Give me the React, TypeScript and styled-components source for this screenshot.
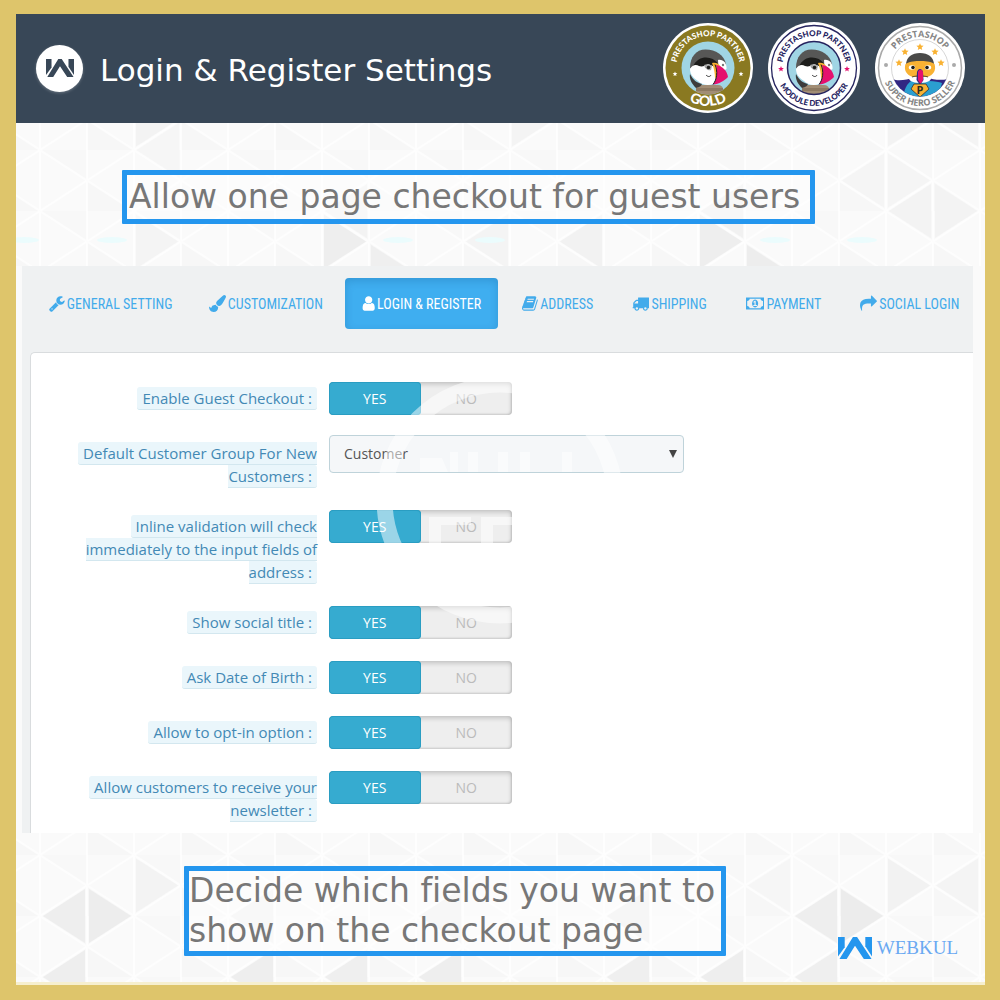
import React, { useState } from "react";
import styled, { createGlobalStyle, css } from "styled-components";

const GlobalStyle = createGlobalStyle`
  *, *::before, *::after { box-sizing: border-box; }
  body { margin: 0; }
  button, select, input { font: inherit; }
`;

const uiFont = '"Open Sans", "Noto Sans", sans-serif';
const titleFont = '"DejaVu Sans", Verdana, sans-serif';
const narrowFont = '"Ubuntu Condensed", "Roboto Condensed", "Liberation Sans Narrow", sans-serif';

/* ---------- page frame ---------- */

const Frame = styled.div`
  min-height: 100vh;
  padding: 14px 15px 15px 16px;
  background: #dec56b;
  display: flex;
`;

const Board = styled.div`
  flex: 1;
  min-width: 0;
  display: flex;
  flex-direction: column;
  background: #fafafa;
`;

const Header = styled.header`
  display: flex;
  align-items: center;
  gap: 17px;
  padding: 8px 19px 9px 20px;
  background: #384757;
`;

const RoundMark = styled.span`
  flex: none;
  display: grid;
  place-items: center;
  width: 47px;
  height: 47px;
  border-radius: 50%;
  background: #fff;
  box-shadow: 0 1px 3px rgba(255, 255, 255, 0.25);
`;

const Title = styled.h1`
  flex: 1;
  margin: 0;
  padding-top: 4px;
  font: 400 31px/44px ${titleFont};
  color: #fff;
  white-space: nowrap;
`;

const Badges = styled.div`
  display: flex;
  gap: 14px;
`;

/* ---------- patterned bands ---------- */

const Band = styled.section`
  position: relative;
  display: flex;
  align-items: flex-start;
  overflow: hidden;
`;

const TopBand = styled(Band)`
  padding: 47px 106px 42px;
`;

const BottomBand = styled(Band)`
  flex: 1;
  justify-content: space-between;
  padding: 33px 27px 22px 168px;
  border-bottom: 3px solid #f6efcf;
`;

const Backdrop = styled.svg`
  position: absolute;
  inset: 0;
  width: 100%;
  height: 100%;
`;

const Note = styled.p`
  position: relative;
  margin: 0;
  padding: 0 6px 0 0;
  border: 5px solid #2496ee;
  border-radius: 1px;
  background: rgba(255, 255, 255, 0.45);
  font: 400 33px/40px ${titleFont};
  font-variant-ligatures: none;
  color: #777;
`;

const TopNote = styled(Note)`
  padding: 0 10px 0 2px;
  line-height: 44px;
`;

const Brand = styled.div`
  position: relative;
  align-self: flex-end;
  display: flex;
  align-items: center;
  gap: 5px;
  font: 400 19px/24px "Liberation Serif", serif;
  color: #6aa9f2;
`;

/* ---------- settings panel ---------- */

const Panel = styled.main`
  position: relative;
  margin: 0 12px 0 6px;
  padding: 12px 0 0 8px;
  background: #eff1f2;
  overflow: hidden;
`;

const Tabs = styled.nav`
  display: grid;
  grid-template-columns:
    minmax(0, 153fr) minmax(0, 146fr) minmax(0, 154fr) minmax(0, 103fr)
    minmax(0, 107fr) minmax(0, 107fr) minmax(0, 130fr);
  column-gap: 7px;
  padding-left: 2px;
`;

const Tab = styled.button<{ $active: boolean }>`
  display: flex;
  align-items: center;
  justify-content: flex-start;
  gap: 2px;
  height: 51px;
  padding: 0 0 0 17px;
  border: 0;
  border-radius: 4px;
  background: none;
  font: 400 14px/20px ${narrowFont};
  color: #42abeb;
  white-space: nowrap;
  cursor: pointer;
  ${(p) =>
    p.$active &&
    css`
      background: #3faef0;
      box-shadow: inset 0 3px 8px rgba(0, 60, 110, 0.2);
      color: #fff;
    `}

  svg { flex: none; }
`;

const Card = styled.form`
  margin-top: 23px;
  padding: 29px 20px 11px 47px;
  border: 1px solid #d9dcde;
  border-width: 1px 0 0 1px;
  border-top-left-radius: 5px;
  background: #fff;
  display: flex;
  flex-direction: column;
  gap: 22px;
`;

const Row = styled.div`
  display: grid;
  grid-template-columns: 239px minmax(0, 355px);
  column-gap: 12px;
  align-items: start;
`;

const LabelCell = styled.div`
  padding-top: 5px;
  text-align: right;
  font: 400 15px/23px ${uiFont};
  color: #4389b5;
`;

const LabelText = styled.label`
  padding: 1px 5px;
  border-bottom: 1px solid #d3e7ef;
  border-radius: 3px;
  background: #eaf6fb;
`;

const ControlCell = styled.div`
  display: flex;
  align-items: center;
  height: 33px;
`;

const Switch = styled.div`
  display: flex;
  width: 183px;
  height: 33px;
  border-radius: 4px;
  background: #eee;
  box-shadow: inset 0 2px 5px rgba(0, 0, 0, 0.2), inset -1px -1px 2px rgba(0, 0, 0, 0.12);
  font: 400 14px/34px ${uiFont};
  overflow: hidden;
`;

const Option = styled.label<{ $on: boolean }>`
  position: relative;
  flex: 1;
  text-align: center;
  color: ${(p) => (p.$on ? "#fff" : "#bbb")};
  background: ${(p) => (p.$on ? "#36abd0" : "transparent")};
  border-radius: 4px;
  box-shadow: ${(p) => (p.$on ? "inset 0 0 0 1px #2a9dc2" : "none")};
  cursor: pointer;

  input {
    position: absolute;
    inset: 0;
    margin: 0;
    opacity: 0;
  }
`;

const SelectBox = styled.span`
  position: relative;
  flex: 1;
  display: flex;

  &::after {
    content: "";
    position: absolute;
    right: 7px;
    top: 15px;
    border: 4px solid transparent;
    border-width: 8px 4px 0;
    border-top-color: #444;
    pointer-events: none;
  }
`;

const Select = styled.select`
  appearance: none;
  flex: 1;
  height: 38px;
  padding: 0 24px 0 14px;
  border: 1px solid #bfd3da;
  border-radius: 4px;
  background: #f5f7f9;
  font: 400 14px/20px ${uiFont};
  color: #555;
`;

const Watermark = styled.svg`
  position: absolute;
  left: 354px;
  top: 110px;
  pointer-events: none;
`;

/* ---------- drawings ---------- */

const WMark = ({ width, color }: { width: number; color: string }) => (
  <svg width={width} height={(width * 22) / 33} viewBox="0 0 33 22" fill={color} aria-hidden="true">
    <path d="M0 0h6.500v10L0 19z" />
    <path d="M26.500 0H33v19L26.500 9z" />
    <path d="M1 22 14.500 0h4L33 22h-7.500L16.500 8.500 8 22z" />
  </svg>
);

type Tile = [col: number, row: number, dir: 1 | -1, fill: string];

/** Triangle lattice whose first full vertex sits at (24, originY). */
const Lattice = ({ id, originY, tiles, glints = [] }: {
  id: string; originY: number; tiles: Tile[]; glints?: number[];
}) => (
  <Backdrop aria-hidden="true">
    <defs>
      <pattern id={id} width="94" height="61" x="24" y={originY} patternUnits="userSpaceOnUse">
        <rect width="94" height="61" fill="#fafafa" />
        <path d="M0 0 47 30.500V-30.500z" fill="#f8f8f8" />
        <path d="M94 61 47 30.500V91.500z" fill="#f7f7f7" />
        <path d="M0 0v61M47 0v61M94 0v61M0 0l94 61M0 61 94 0" stroke="#fff" strokeOpacity="0.7" strokeWidth="2" />
      </pattern>
    </defs>
    <rect width="100%" height="100%" fill={`url(#${id})`} />
    {tiles.map(([col, row, dir, fill]) => {
      const x = 24 + col * 47;
      const y = originY + row * 30.5;
      return <path key={`${col}:${row}:${dir}`} d={`M${x + 3 * dir} ${y}l${42 * dir} -27v54z`} fill={fill} />;
    })}
    {glints.map((x) => <ellipse key={x} cx={x} cy="117" rx="15" ry="3" fill="#ebfcfd" />)}
  </Backdrop>
);

const TOP_TILES: Tile[] = [
  [3, -1, -1, "#f3f3f3"], [2, 0, 1, "#f6f6f6"], [7, 3, -1, "#eeeeee"], [8, 4, -1, "#efefef"],
  [6, 2, 1, "#f3f3f3"], [3, 3, -1, "#f4f4f4"], [9, 3, 1, "#f4f4f4"], [11, -1, -1, "#f4f4f4"],
  [15, 3, -1, "#eeeeee"], [16, 4, -1, "#ededed"], [14, 2, 1, "#f1f1f1"], [11, 3, 1, "#f2f2f2"],
  [17, 1, 1, "#f5f5f5"], [18, 2, 1, "#f3f3f3"], [20, 2, -1, "#f3f3f3"], [19, 1, -1, "#f5f5f5"],
  [19, -1, -1, "#f3f3f3"], [19, -1, 1, "#f4f4f4"],
];

const BOTTOM_TILES: Tile[] = [
  [0, 2, 1, "#eeeeee"], [2, 2, -1, "#ededed"], [3, 1, -1, "#f3f3f3"], [0, 4, 1, "#eeeeee"],
  [4, 2, 1, "#f2f2f2"], [4, 4, 1, "#eeeeee"], [6, 4, 1, "#efefef"], [8, 4, 1, "#eeeeee"],
  [8, 2, 1, "#f0f0f0"], [12, 2, 1, "#eeeeee"], [12, 4, 1, "#efefef"], [14, 4, 1, "#eeeeee"],
  [16, 4, 1, "#efefef"], [16, 2, 1, "#eeeeee"], [18, 2, -1, "#ececec"], [19, 1, -1, "#f2f2f2"],
  [19, 1, 1, "#f4f4f4"], [15, 1, 1, "#f6f6f6"],
];

const TOP_GLINTS = [8, 96, 382, 474, 759, 846];

const Arcs = ({ id, top, bottom }: { id: string; top: number; bottom: number }) => (
  <defs>
    <path id={`${id}-top`} d={`M${46 - top} 46a${top} ${top} 0 0 1 ${2 * top} 0`} />
    <path id={`${id}-bottom`} d={`M${46 - bottom} 46a${bottom} ${bottom} 0 0 0 ${2 * bottom} 0`} />
  </defs>
);

const badgeFont = 'Lato, "Open Sans", sans-serif';

const ArcText = ({ path, size, fill, weight = 700, family = badgeFont, children }: {
  path: string; size: number; fill: string; weight?: number; family?: string; children: string;
}) => (
  <text fontFamily={family} fontWeight={weight} fontSize={size} fill={fill} textAnchor="middle">
    <textPath href={`#${path}`} startOffset="50%">{children}</textPath>
  </text>
);

const Star = ({ x, y, r, fill }: { x: number; y: number; r: number; fill: string }) => {
  const points = Array.from({ length: 10 }, (_, i) => {
    const radius = i % 2 ? r * 0.45 : r;
    const angle = (Math.PI / 5) * i - Math.PI / 2;
    return `${(x + radius * Math.cos(angle)).toFixed(2)},${(y + radius * Math.sin(angle)).toFixed(2)}`;
  }).join(" ");
  return <polygon points={points} fill={fill} />;
};

const Puffin = ({ clip }: { clip: string }) => (
  <g>
    <clipPath id={clip}><circle cx="46" cy="46" r="26.500" /></clipPath>
    <circle cx="46" cy="46" r="26.500" fill="#a0d5e4" />
    <g clipPath={`url(#${clip})`}>
      <path d="M34 76V67c0-3 1-4 4-4h18c3 0 5 2 5 4v9z" fill="#a18d75" />
      <path d="M34 66h27v3H34z" fill="#8c7962" />
      <path d="M28 46c0-11 6-18.500 15.500-18.500C54 27.500 62 33 64 42l-7 6H32z" fill="#575756" />
      <path d="M31 44c3-6 8-8.500 13-8.500 5 0 9 2 12 6l-3 8H35z" fill="#1d1d1b" />
      <path d="M28 47c2-4 6-5 9-3 3 1 6 0 9-2l7 3 1 12-3 5c-5 2-11 1-15-3-5-3-8-7-8-12z" fill="#fff" />
      <path d="M28 52c3 6 7 9 12 10-1 2-2 3-6 4-4-4-7-9-6-14z" fill="#3c3c3b" />
      <path d="M56 38c5-1 9 3 8.500 9-2 2-6 1-8-2z" fill="#fff" />
      <path d="M42 43c3-1 6-1 8 1l-1 4c-3 1-6-1-7-5z" fill="#a7a7a7" />
      <circle cx="46.500" cy="45.500" r="1.800" fill="#1d1d1b" />
      <circle cx="61" cy="43" r="1.200" fill="#777" />
      <path d="M50 41c3-1 7 0 9 4l-6 12c0-6-1-11-3-16z" fill="#f9b233" />
      <path d="M54 43c7 1 11 6 12 12-4 4-9 7-15 7.500 4-5 5-13 3-19.500z" fill="#e5106e" />
      <path d="M53 42.500c3 7 2 15-2 20" stroke="#1d1d1b" strokeWidth="1" fill="none" />
      <path d="M44 53c2 2 4 2 5 0" stroke="#333" strokeWidth="1" fill="none" />
    </g>
  </g>
);

const GoldBadge = () => (
  <svg width="92" height="92" viewBox="0 0 92 92" role="img" aria-label="PrestaShop Partner Gold">
    <Arcs id="gold" top={32} bottom={38} />
    <circle cx="46" cy="46" r="45" fill="#fff" />
    <circle cx="46" cy="46" r="42.500" fill="#8a7921" />
    <Puffin clip="gold-clip" />
    <ArcText path="gold-top" size={8} fill="#fff" weight={900}>PRESTASHOP PARTNER</ArcText>
    <ArcText path="gold-bottom" size={14} fill="#fff" weight={900}>GOLD</ArcText>
    <Star x={13} y={52} r={2.5} fill="#fff" />
    <Star x={79} y={52} r={2.5} fill="#fff" />
  </svg>
);

const ModuleBadge = () => (
  <svg width="92" height="92" viewBox="0 0 92 92" role="img" aria-label="PrestaShop Partner Module Developer">
    <Arcs id="module" top={32} bottom={38} />
    <circle cx="46" cy="46" r="46" fill="#fff" />
    <circle cx="46" cy="46" r="42.500" fill="#fff" stroke="#26245f" strokeWidth="1.300" />
    <Puffin clip="module-clip" />
    <circle cx="46" cy="46" r="26.500" fill="none" stroke="#26245f" strokeWidth="1.500" />
    <ArcText path="module-top" size={8} fill="#26245f" weight={900}>PRESTASHOP PARTNER</ArcText>
    <ArcText path="module-bottom" size={8} fill="#26245f" weight={900}>MODULE DEVELOPER</ArcText>
    <Star x={13} y={47} r={3} fill="#e5106e" />
    <Star x={79} y={47} r={3} fill="#e5106e" />
  </svg>
);

const HERO_STARS = [[25, 41], [31, 30], [46, 25], [61, 30], [67, 41]];

const HeroBadge = () => (
  <svg width="92" height="92" viewBox="0 0 92 92" role="img" aria-label="PrestaShop Super Hero Seller">
    <Arcs id="hero" top={31} bottom={38} />
    <clipPath id="hero-clip"><circle cx="46" cy="46" r="28.500" /></clipPath>
    <circle cx="46" cy="46" r="45" fill="#fff" />
    <circle cx="46" cy="46" r="41.500" fill="none" stroke="#aaa" strokeWidth="1.500" />
    <circle cx="46" cy="46" r="28.500" fill="#fff" stroke="#bbb" strokeWidth="0.600" />
    <g clipPath="url(#hero-clip)">
      <path d="M18 57c8 3 15 0 21-1h14c6 1 12 3 21 1l-6 20H26z" fill="#312783" />
      <path d="M29 76c1-8 3-13 8-17h18c6 0 10 1 13 2l-4 15z" fill="#2b9fd0" />
      <path d="M35 53h22c2 5-3 8-11 8s-13-3-11-8z" fill="#fff" />
      <path d="M32 43c0-8 6-12 14-12s14 4 14 12z" fill="#4a4a49" />
      <path d="M31.500 42c5-3 10-3 14.500-3s10 0 14.500 3c2 6-1 11-7 13H38.500c-6-2-9-7-7-13z" fill="#f9b233" />
      <ellipse cx="38" cy="45.500" rx="3.200" ry="2.200" fill="#fff" />
      <ellipse cx="54" cy="45.500" rx="3.200" ry="2.200" fill="#fff" />
      <circle cx="39" cy="45.500" r="1.800" fill="#1d1d1b" />
      <circle cx="53" cy="45.500" r="1.800" fill="#1d1d1b" />
      <path d="M38 55c3-1 5-1 8-1s5 0 8 1" stroke="#333" strokeWidth="0.800" fill="none" />
      <path d="M43 50c1-4 5-4 6 0l.5 8-3.500 5-3.500-5z" fill="#312783" />
      <path d="M44 50c1-3 4-3 5 0v8l-2.500 4-2.500-4z" fill="#e5106e" />
      <path d="M40 62h12l3 5-9 8-9-8z" fill="#f9b233" stroke="#333" strokeWidth="0.800" />
    </g>
    <text x="46" y="72" fontFamily='"Open Sans", sans-serif' fontWeight="700" fontSize="11" textAnchor="middle" fill="#312c20">P</text>
    <ArcText path="hero-top" size={9} fill="#868686" family='"Open Sans", sans-serif'>PRESTASHOP</ArcText>
    <ArcText path="hero-bottom" size={9} fill="#868686" family='"Open Sans", sans-serif'>SUPER HERO SELLER</ArcText>
    <circle cx="12" cy="43" r="2" fill="#aaa" />
    <circle cx="80" cy="43" r="2" fill="#aaa" />
    {HERO_STARS.map(([x, y]) => <Star key={x} x={x} y={y} r={3.8} fill="#f9b233" />)}
  </svg>
);

const Glyph = ({ d, width = 1792 }: { d: string; width?: number }) => (
  <svg width={(width * 17) / 1792} height="17" viewBox={`0 0 ${width} 1792`} fill="currentColor" aria-hidden="true">
    <path d={d} />
  </svg>
);

const ICONS = {
  wrench: "M384 1472q0-26-19-45t-45-19-45 19-19 45 19 45 45 19 45-19 19-45zm644-420l-682 682q-37 37-90 37-52 0-91-37l-106-108q-38-36-38-90 0-53 38-91l681-681q39 98 114.500 173.500t173.500 114.500zm634-435q0 39-23 106-47 134-164.500 217.500t-258.500 83.500q-185 0-316.500-131.500t-131.500-316.500 131.500-316.500 316.500-131.500q58 0 121.500 16.500t107.500 46.500q16 11 16 28t-16 28l-293 169v224l193 107q5-3 79-48.500t135.500-81 70.500-35.500q15 0 23.500 10t8.500 25z",
  brush: "M1615 0q70 0 122.500 46.500t52.500 116.500q0 63-45 151-332 629-465 752-97 91-218 91-126 0-216.500-92.500t-90.500-219.500q0-128 92-212l638-579q59-54 130-54zm-909 1034q39 76 106.500 130t150.500 76l1 71q4 213-129.500 347t-348.500 134q-123 0-218-46.500t-152.500-127.500-86.500-183-29-220q7 5 41 30t62 44.500 59 36.500 46 17q41 0 55-37 25-66 57.500-112.500t69.500-76 88-47.500 103-25.500 125-10.500z",
  user: "M1344 1399q0 109-62.500 187t-150.500 78h-854q-88 0-150.500-78t-62.500-187q0-85 8.500-160.500t31.500-152 58.500-131 94-89 134.500-34.500q131 128 313 128t313-128q76 0 134.500 34.500t94 89 58.500 131 31.500 152 8.500 160.500zm-256-887q0 159-112.500 271.500t-271.500 112.500-271.500-112.500-112.500-271.500 112.500-271.500 271.500-112.500 271.500 112.500 112.500 271.500z",
  book: "M1639 478q40 57 18 129l-275 906q-19 64-76.500 107.500t-122.500 43.500h-923q-77 0-148.500-53.500t-99.500-131.500q-24-67-2-127 0-4 3-27t4-37q1-8-3-21.500t-3-19.500q2-11 8-21t16.500-23.500 16.500-23.500q23-38 45-91.500t30-91.500q3-10 .5-30t-.5-28q3-11 17-28t17-23q21-36 42-92t25-90q1-9-2.500-32t.5-28q4-13 22-30.500t22-22.500q19-26 42.500-84.500t27.500-96.500q1-8-3-25.500t-2-26.500q2-8 9-18t18-23 17-21q8-12 16.500-30.500t15-35 16-36 19.500-32 26.500-23.500 36-11.500 47.500 5.500l-1 3q38-9 51-9h761q74 0 114 56t18 130l-274 906q-36 119-71.500 153.500t-128.500 34.500h-869q-27 0-38 15-11 16-1 43 24 70 144 70h923q29 0 56-15.500t35-41.500l300-987q7-22 5-57 38 15 59 43zm-1064 2q-4 13 2 22.500t20 9.500h608q13 0 25.500-9.500t16.500-22.500l21-64q4-13-2-22.500t-20-9.500h-608q-13 0-25.500 9.500t-16.500 22.500zm-83 256q-4 13 2 22.500t20 9.500h608q13 0 25.500-9.500t16.500-22.500l21-64q4-13-2-22.500t-20-9.500h-608q-13 0-25.500 9.500t-16.500 22.500z",
  truck: "M640 1408q0-52-38-90t-90-38-90 38-38 90 38 90 90 38 90-38 38-90zm-384-512h384v-256h-158q-13 0-22 9l-195 195q-9 9-9 22v30zm1280 512q0-52-38-90t-90-38-90 38-38 90 38 90 90 38 90-38 38-90zm256-1088v1024q0 15-4 26.500t-13.500 18.500-16.500 11.500-23.500 6-22.500 2-25.500 0-22.500-.5q0 106-75 181t-181 75-181-75-75-181h-384q0 106-75 181t-181 75-181-75-75-181h-64q-3 0-22.500.5t-25.500 0-22.500-2-23.500-6-16.500-11.500-13.500-18.500-4-26.500q0-26 19-45t45-19v-320q0-8-.5-35t0-38 2.500-34.500 6.500-37 14-30.500 22.500-30l198-198q19-19 50.500-32t58.500-13h160v-192q0-26 19-45t45-19h1024q26 0 45 19t19 45z",
  money: "M768 1152h384v-96h-128v-448h-114l-148 137 77 80q42-37 55-57h2v288h-128v96zm512-256q0 70-21 142t-59.500 134-101.500 101-138 39-138-39-101.500-101-59.500-134-21-142 21-142 59.500-134 101.500-101 138-39 138 39 101.500 101 59.500 134 21 142zm512 256v-512q-106 0-181-75t-75-181h-1152q0 106-75 181t-181 75v512q106 0 181 75t75 181h1152q0-106 75-181t181-75zm128-832v1152q0 26-19 45t-45 19h-1792q-26 0-45-19t-19-45v-1152q0-26 19-45t45-19h1792q26 0 45 19t19 45z",
  share: "M1792 640q0 26-19 45l-512 512q-19 19-45 19t-45-19-19-45v-256h-224q-98 0-175.500 6t-154 21.500-133 42.500-105.500 69.500-80 101-48.500 138.500-17.500 181q0 55 5 123 0 6 2.500 23.500t2.500 26.500q0 15-8.500 25t-23.500 10q-16 0-28-17-7-9-13-22t-13.500-30-10.500-24q-127-285-127-451 0-199 53-333 162-403 875-403h224v-256q0-26 19-45t45-19 45 19l512 512q19 19 19 45z",
};

/* ---------- data ---------- */

const TABS = [
  { icon: ICONS.wrench, text: "GENERAL SETTING", width: 1664 },
  { icon: ICONS.brush, text: "CUSTOMIZATION" },
  { icon: ICONS.user, text: "LOGIN & REGISTER", width: 1408 },
  { icon: ICONS.book, text: "ADDRESS", width: 1664 },
  { icon: ICONS.truck, text: "SHIPPING" },
  { icon: ICONS.money, text: "PAYMENT", width: 1920 },
  { icon: ICONS.share, text: "SOCIAL LOGIN" },
];

type Field = { id: string; label: string; options?: string[] };

const FIELDS: Field[] = [
  { id: "guest", label: "Enable Guest Checkout :" },
  { id: "group", label: "Default Customer Group For New Customers :", options: ["Customer", "Guest", "Visitor"] },
  { id: "inline", label: "Inline validation will check immediately to the input fields of address :" },
  { id: "social", label: "Show social title :" },
  { id: "birth", label: "Ask Date of Birth :" },
  { id: "optin", label: "Allow to opt-in option :" },
  { id: "newsletter", label: "Allow customers to receive your newsletter :" },
];

const YesNo = ({ id }: { id: string }) => {
  const [on, setOn] = useState(true);
  return (
    <Switch role="radiogroup" aria-labelledby={`${id}-label`}>
      <Option $on={on}>
        <input type="radio" id={id} name={id} checked={on} onChange={() => setOn(true)} />
        YES
      </Option>
      <Option $on={!on}>
        <input type="radio" name={id} checked={!on} onChange={() => setOn(false)} />
        NO
      </Option>
    </Switch>
  );
};

const FormRow = ({ field }: { field: Field }) => (
  <Row>
    <LabelCell>
      <LabelText id={`${field.id}-label`} htmlFor={field.id}>{field.label}</LabelText>
    </LabelCell>
    <ControlCell>
      {field.options ? (
        <SelectBox>
          <Select id={field.id}>
            {field.options.map((o) => <option key={o}>{o}</option>)}
          </Select>
        </SelectBox>
      ) : (
        <YesNo id={field.id} />
      )}
    </ControlCell>
  </Row>
);

export default function App() {
  const [active, setActive] = useState(2);
  return (
    <>
      <GlobalStyle />
      <Frame>
        <Board>
          <Header>
            <RoundMark><WMark width={28} color="#384757" /></RoundMark>
            <Title>Login &amp; Register Settings</Title>
            <Badges>
              <GoldBadge />
              <ModuleBadge />
              <HeroBadge />
            </Badges>
          </Header>

          <TopBand>
            <Lattice id="lattice-top" originY={27} tiles={TOP_TILES} glints={TOP_GLINTS} />
            <TopNote>Allow one page checkout for guest users</TopNote>
          </TopBand>

          <Panel>
            <Tabs>
              {TABS.map((tab, i) => (
                <Tab key={tab.text} type="button" $active={i === active} onClick={() => setActive(i)}>
                  <Glyph d={tab.icon} width={tab.width} />
                  {tab.text}
                </Tab>
              ))}
            </Tabs>
            <Card>
              {FIELDS.map((field) => <FormRow key={field.id} field={field} />)}
            </Card>
            <Watermark width="248" height="248" viewBox="0 0 248 248" fill="#fff" aria-hidden="true">
              <circle cx="124" cy="124" r="115.500" fill="none" stroke="#fff" strokeWidth="16" opacity="0.5" />
              <g opacity="0.5">
                <path d="M44 82h22l6 14H44zM74 76h8v20h-8zM92 76h10v20H92zM122 76h10v20h-10zM144 76h10v20h-10zM186 76h10v20h-10z" />
                <path d="M53 141h42v8H65v20H53zM105 141h32v8h-20v20h-12z" />
              </g>
            </Watermark>
          </Panel>

          <BottomBand>
            <Lattice id="lattice-bottom" originY={22} tiles={BOTTOM_TILES} />
            <Note>
              Decide which fields you want to
              <br />
              show on the checkout page
            </Note>
            <Brand>
              <WMark width={34} color="#2496ee" />
              WEBKUL
            </Brand>
          </BottomBand>
        </Board>
      </Frame>
    </>
  );
}
